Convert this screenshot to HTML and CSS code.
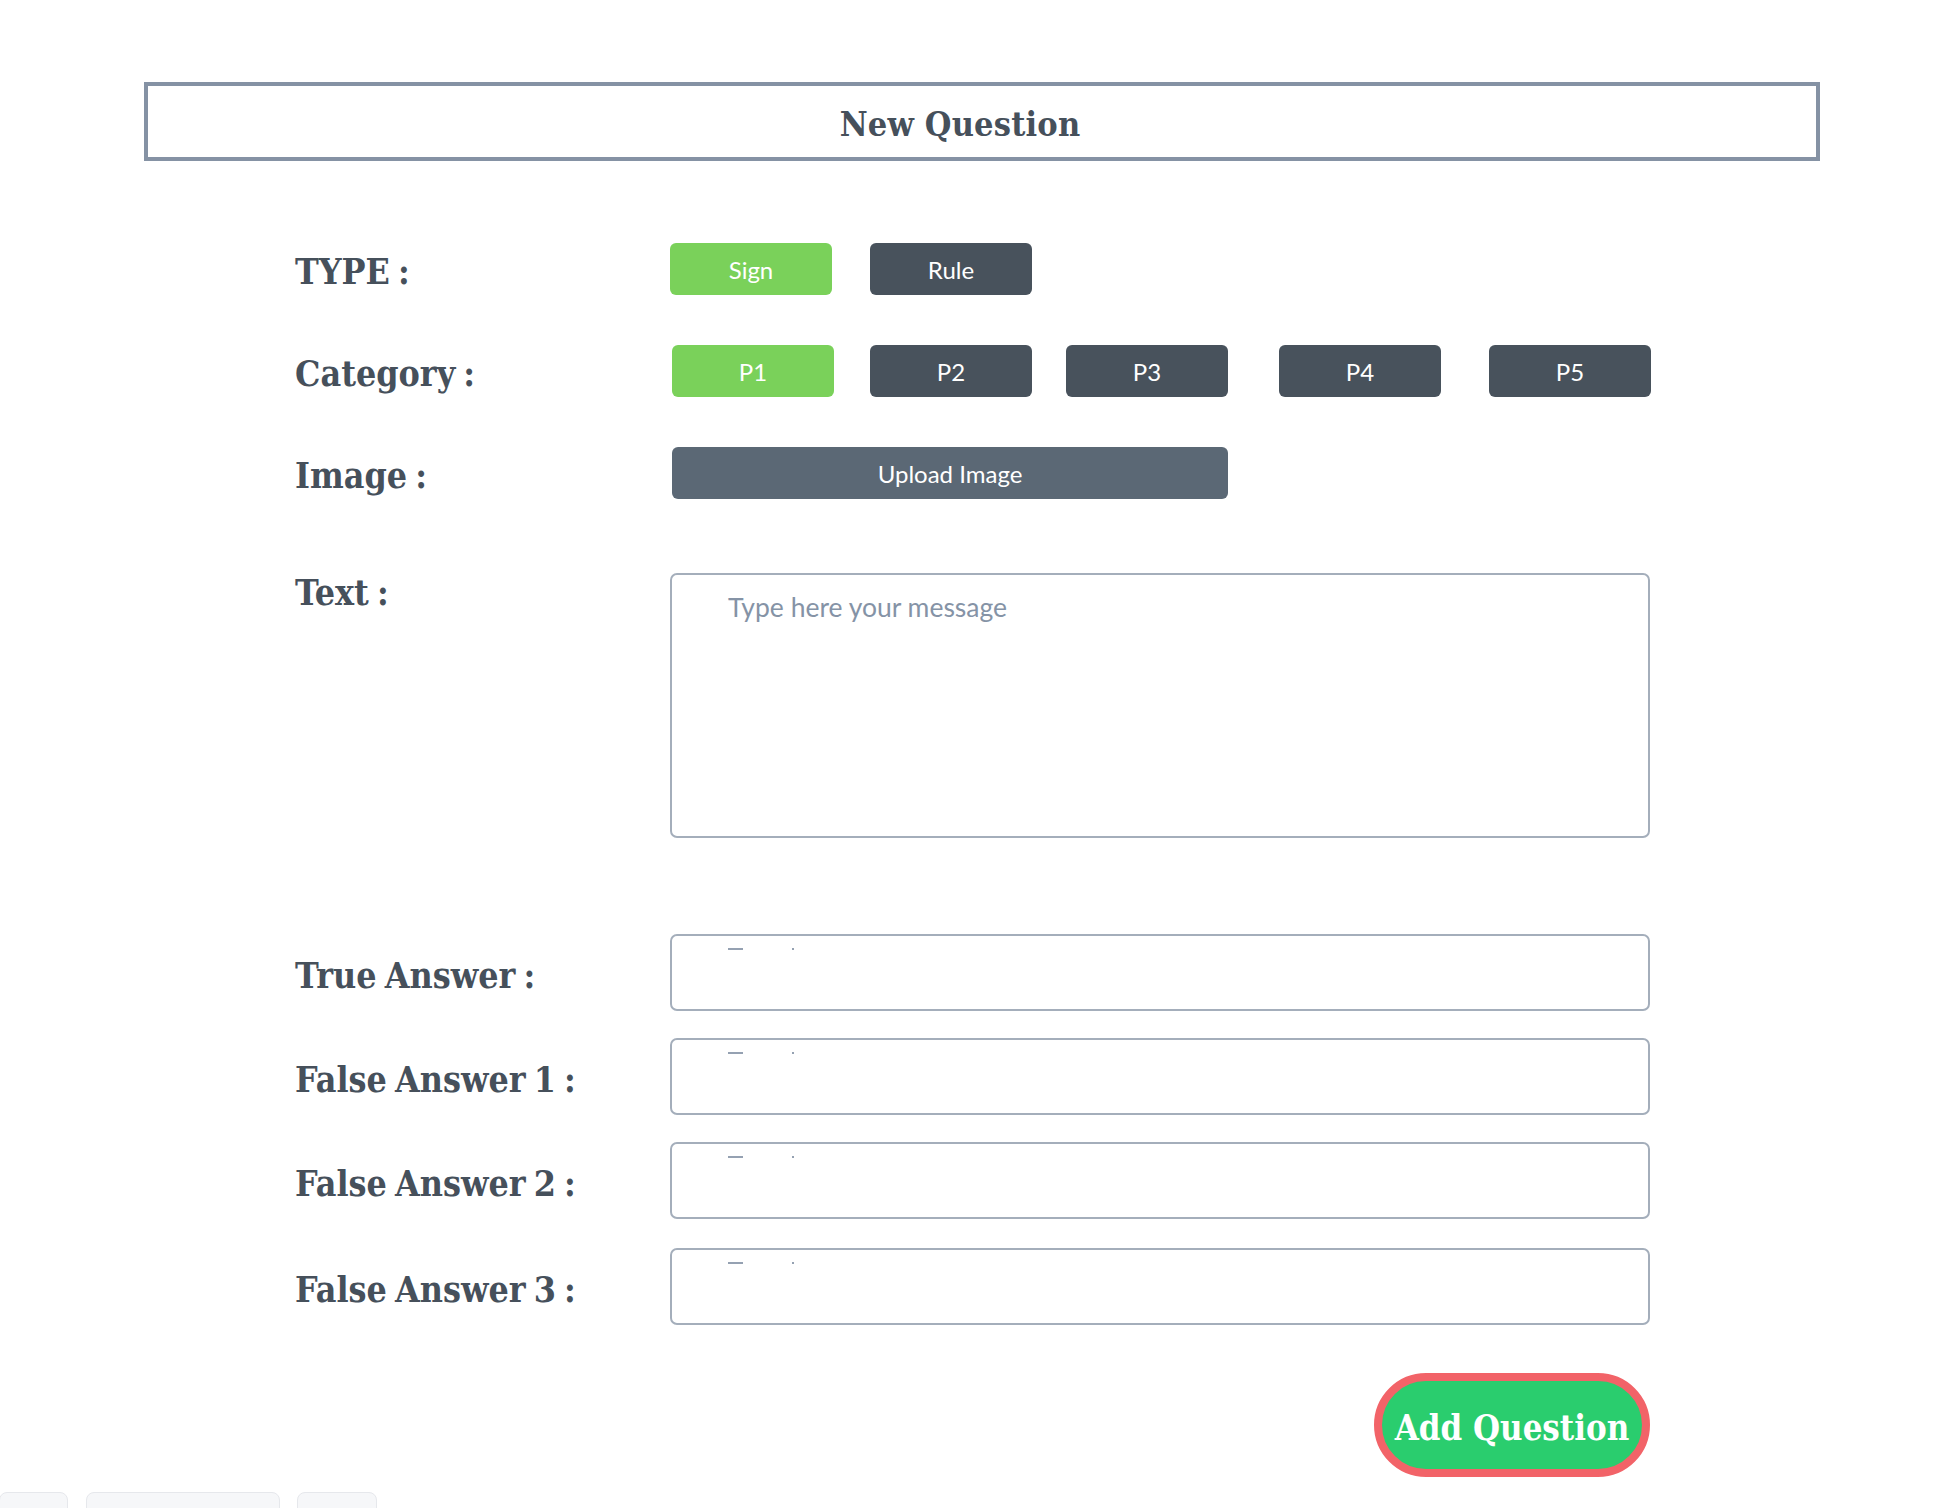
FILE: index.html
```html
<!DOCTYPE html>
<html lang="en">
<head>
<meta charset="utf-8">
<title>New Question</title>
<link rel="stylesheet" href="styles.css">
</head>
<body>
<div class="page">
  <header class="title-box"><h1 class="title">New Question</h1></header>

  <form class="form">
    <div class="row row-type">
      <div class="label">TYPE :</div>
      <div class="controls">
        <button type="button" class="btn btn-green">Sign</button>
        <button type="button" class="btn btn-dark btn-rule">Rule</button>
      </div>
    </div>

    <div class="row row-cat">
      <div class="label">Category :</div>
      <div class="controls controls-cat">
        <button type="button" class="btn btn-green">P1</button>
        <button type="button" class="btn btn-dark cat-2">P2</button>
        <button type="button" class="btn btn-dark cat-3">P3</button>
        <button type="button" class="btn btn-dark cat-4">P4</button>
        <button type="button" class="btn btn-dark cat-5">P5</button>
      </div>
    </div>

    <div class="row row-img">
      <div class="label">Image :</div>
      <div class="controls controls-cat">
        <button type="button" class="btn btn-upload">Upload Image</button>
      </div>
    </div>

    <div class="row row-text">
      <div class="label label-top">Text :</div>
      <div class="textarea"><span class="placeholder">Type here your message</span></div>
    </div>

    <div class="row row-answer row-first">
      <div class="label">True Answer :</div>
      <div class="input"><span class="dash"></span><span class="dot"></span></div>
    </div>
    <div class="row row-answer">
      <div class="label">False Answer 1 :</div>
      <div class="input"><span class="dash"></span><span class="dot"></span></div>
    </div>
    <div class="row row-answer">
      <div class="label">False Answer 2 :</div>
      <div class="input"><span class="dash"></span><span class="dot"></span></div>
    </div>
    <div class="row row-answer row-last">
      <div class="label">False Answer 3 :</div>
      <div class="input"><span class="dash"></span><span class="dot"></span></div>
    </div>

    <div class="submit-row">
      <button type="button" class="btn-add">Add Question</button>
    </div>
  </form>

  <div class="tabs">
    <div class="tab tab-1"></div>
    <div class="tab tab-2"></div>
    <div class="tab tab-3"></div>
  </div>
</div>
</body>
</html>
```

FILE: styles.css
```css
* { box-sizing: border-box; }

html, body {
  margin: 0;
  padding: 0;
  background: #ffffff;
}

body {
  font-family: "Lato", "Liberation Sans", sans-serif;
  color: #46505b;
  overflow: hidden;
  height: 1508px;
}

.page {
  width: 1952px;
  padding-top: 82px;
}

.title-box {
  margin-left: 144px;
  width: 1676px;
  height: 79px;
  border: 4px solid #8592a4;
  display: flex;
  align-items: center;
  justify-content: center;
  padding: 5px 44px 0 0;
}

.title {
  margin: 0;
  font-family: "DejaVu Serif Condensed", "DejaVu Serif", serif;
  font-stretch: condensed;
  font-weight: bold;
  font-size: 34px;
  color: #46505b;
  letter-spacing: 0.2px;
}

.form {
  margin-left: 295px;
  padding-top: 82px;
}

.row {
  display: flex;
  align-items: center;
}

.row-cat, .row-img { margin-top: 50px; }
.row-text { margin-top: 74px; align-items: flex-start; }
.row-answer { margin-top: 27px; }
.row-first { margin-top: 96px; }
.row-last { margin-top: 29px; }

.label {
  width: 375px;
  height: 52px;
  flex: none;
  font-family: "DejaVu Serif Condensed", "DejaVu Serif", serif;
  font-stretch: condensed;
  font-weight: bold;
  font-size: 35.5px;
  color: #46505b;
  line-height: 46px;
  word-spacing: -3px;
  padding-top: 6px;
}

.label-top { margin-top: -9px; }

.controls {
  display: flex;
  align-items: center;
}

.controls-cat { padding-left: 2px; }

.btn {
  width: 162px;
  height: 52px;
  border: none;
  border-radius: 6px;
  font-family: "Lato", "Liberation Sans", sans-serif;
  font-size: 24px;
  color: #ffffff;
  padding: 0;
}

.btn-green { background: #7ad15a; }
.btn-dark { background: #48525c; }
.btn-rule { margin-left: 38px; }
.cat-2 { margin-left: 36px; }
.cat-3 { margin-left: 34px; }
.cat-4 { margin-left: 51px; }
.cat-5 { margin-left: 48px; }

.btn-upload {
  width: 556px;
  background: #5b6875;
}

.textarea {
  width: 980px;
  height: 265px;
  border: 2px solid #a4aebb;
  border-radius: 7px;
  padding: 16px 0 0 56px;
}

.placeholder {
  font-family: "Lato", "Liberation Sans", sans-serif;
  font-size: 26.5px;
  color: #8593a6;
}

.input {
  width: 980px;
  height: 77px;
  border: 2px solid #a4aebb;
  border-radius: 7px;
  display: flex;
  align-items: flex-start;
  padding: 12px 0 0 56px;
}

.dash {
  width: 15px;
  height: 2px;
  background: #95a1b2;
}

.dot {
  width: 2px;
  height: 2px;
  background: #95a1b2;
  margin-left: 49px;
}

.submit-row {
  width: 1355px;
  display: flex;
  justify-content: flex-end;
  margin-top: 48px;
}

.btn-add {
  width: 276px;
  height: 104px;
  border: 8px solid #f26368;
  border-radius: 52px;
  background: #2acd6e;
  color: #ffffff;
  font-family: "DejaVu Serif Condensed", "DejaVu Serif", serif;
  font-stretch: condensed;
  font-weight: bold;
  font-size: 34.5px;
  padding: 5px 0 0;
}

.tabs {
  display: flex;
  margin-top: 15px;
}

.tab {
  height: 30px;
  background: #f6f7f9;
  border: 1px solid #e6e8ec;
  border-radius: 8px 8px 0 0;
}

.tab-1 { width: 69px; margin-left: -1px; }
.tab-2 { width: 194px; margin-left: 18px; }
.tab-3 { width: 80px; margin-left: 17px; }
```
